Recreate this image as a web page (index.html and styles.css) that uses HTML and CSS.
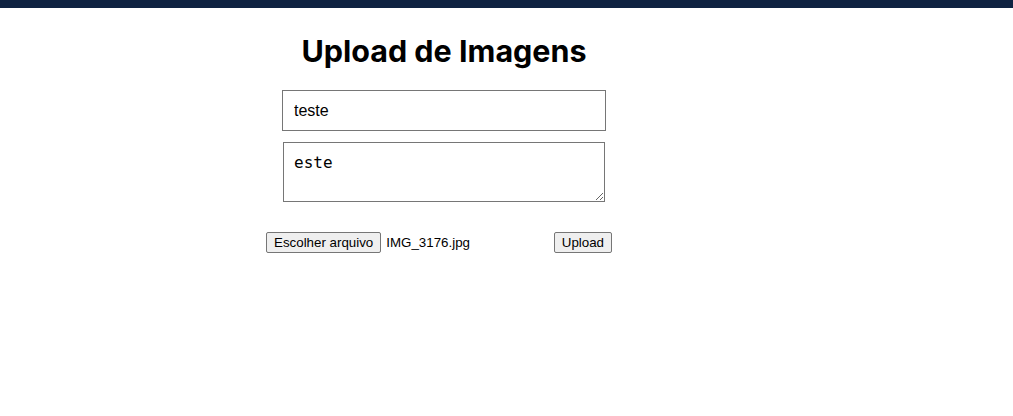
FILE: index.html
```html
<!DOCTYPE html>
<html lang="pt-BR">
<head>
<meta charset="utf-8">
<title>Upload de Imagens</title>
<link rel="stylesheet" href="styles.css">
</head>
<body>
<header class="topbar"></header>
<main class="page">
  <form class="upload-form">
    <h1 class="title">Upload de Imagens</h1>
    <input class="text-input" type="text" value="teste">
    <textarea class="text-area">este</textarea>
    <div class="file-row">
      <div class="file-pick">
        <button type="button" class="btn">Escolher arquivo</button>
        <span class="file-name">IMG_3176.jpg</span>
      </div>
      <button type="button" class="btn">Upload</button>
    </div>
  </form>
</main>
</body>
</html>
```
FILE: styles.css
```css
html, body {
  margin: 0;
  padding: 0;
  background: #ffffff;
}

body {
  font-family: "Liberation Sans", Arial, sans-serif;
  color: #000;
}

.topbar {
  height: 8px;
  background: #0f2342;
}

.page {
  padding-left: 266px;
}

.upload-form {
  width: 346px;
  display: flex;
  flex-direction: column;
}

.title {
  font-family: Inter, "Liberation Sans", sans-serif;
  font-weight: 700;
  font-size: 30.5px;
  line-height: 39px;
  margin: 23px 0 20px 10px;
  text-align: center;
}

.text-input {
  box-sizing: border-box;
  width: 324px;
  height: 41px;
  margin: 0 0 11px 16px;
  padding: 0 11px;
  border: 1px solid #767676;
  border-radius: 0;
  font-family: "Liberation Sans", Arial, sans-serif;
  font-size: 16px;
  color: #000;
}

.text-area {
  box-sizing: border-box;
  width: 322px;
  height: 60px;
  margin: 0 0 30px 17px;
  padding: 10px;
  border: 1px solid #767676;
  border-radius: 0;
  font-family: "DejaVu Sans Mono", monospace;
  font-size: 16px;
  color: #000;
  resize: vertical;
}

.file-row {
  display: flex;
  justify-content: space-between;
  align-items: center;
}

.file-pick {
  display: flex;
  align-items: center;
  gap: 5px;
}

.btn {
  font-family: "Liberation Sans", Arial, sans-serif;
  font-size: 13.33px;
  line-height: 15px;
  padding: 2px 7px;
  background: #efefef;
  border: 1px solid #767676;
  border-radius: 2px;
  color: #000;
}

.file-name {
  font-size: 13.33px;
}
```
